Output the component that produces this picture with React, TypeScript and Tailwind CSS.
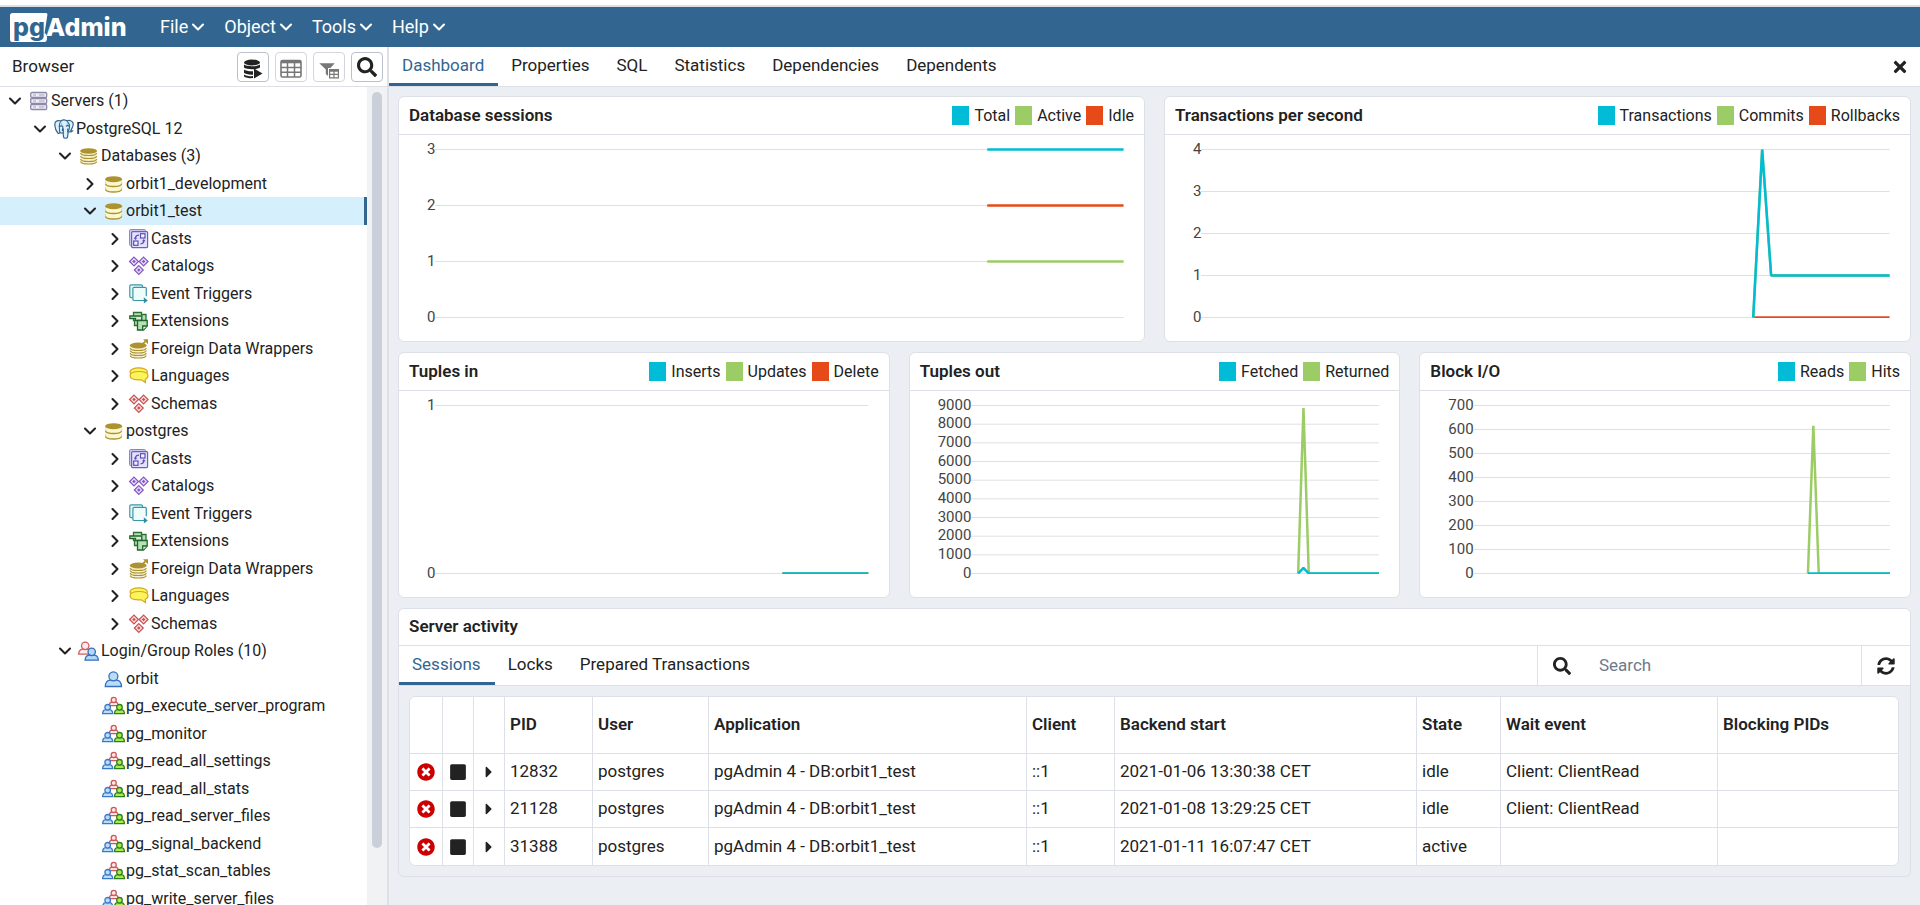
import { ReactNode } from 'react';
import clsx from 'clsx';
import { ChevronDown, ChevronRight } from 'lucide-react';
import { FaCaretRight, FaSearch, FaSquare, FaSyncAlt, FaTimes, FaTimesCircle } from 'react-icons/fa';

const CYAN = '#00bcd7';
const GREEN = '#9ccc65';
const RED = '#e64a19';

/* ---------- tree icons ---------- */

function Icon({ children }: { children: ReactNode }) {
  return (
    <svg width="20" height="20" viewBox="0 0 20 20" className="shrink-0 overflow-visible" fill="none" aria-hidden="true">
      {children}
    </svg>
  );
}

function ServersIcon() {
  return (
    <Icon>
      {[1.5, 7.5, 13.5].map((y) => (
        <g key={y}>
          <rect x="1.7" y={y} width="16" height="5" rx="1.2" fill="#efeef6" stroke="#8d89a8" strokeWidth="1.3" />
          <path d={`M4 ${y + 2.5}h3M10 ${y + 2.5}h5.5`} stroke="#a5a2bb" strokeWidth="1" />
        </g>
      ))}
    </Icon>
  );
}

function ElephantIcon() {
  return (
    <Icon>
      <path
        d="M5.5 1.6C2.6 1.2.6 3 .8 6c.2 3 1.5 6.3 3 8 .8.7 1.6.3 2.2-.5.8.6 2 .6 3.200.3l.3 4c.3 1.9 3.8 1.9 4.1 0l.6-5c1.6.3 3.6.1 4.4-.9-.7-.1-1.5-.1-1.8-.4C18.6 8.5 20 4.3 18.3 2.8 16.8 1.3 14.6 1 12.8 1.7 11.2.9 8.5.8 7 1.9c-.5-.1-1-.3-1.5-.3z"
        fill="#dcf1fb"
        stroke="#32668f"
        strokeWidth="1.2"
      />
      <path
        d="M7 2C5 4.500 5.200 8 5.500 10c.2 1.500-.3 2.500.5 3.500M5.400 7.500c1-.9 3-.8 3.400 0 .3 1.500-.3 3-.6 4.500M12.800 1.800c1.700 1.600 2.900 3.400 2.700 5.700-.2 1.500.1 2.500-1.300 4.500M11.800 7.200c1.200-.8 2.600-.6 3.700 0M9.400 9.500c.2 2-.3 3-.2 4.500M13.700 9.500v4"
        stroke="#32668f"
        strokeWidth="1.1"
      />
      <path d="M7.3 5h.8M12.8 5h.8" stroke="#32668f" strokeWidth="1.2" />
    </Icon>
  );
}

function DatabasesIcon() {
  return (
    <Icon>
      <path d="M1.6 5v10.500c0 1.5 3.5 2.5 8 2.5s8-1 8-2.5V5z" fill="#f5f1c8" />
      <path
        d="M1.6 7c0 1.5 3.5 2.5 8 2.5s8-1 8-2.500M1.6 10c0 1.5 3.5 2.5 8 2.5s8-1 8-2.500M1.6 13c0 1.5 3.5 2.5 8 2.5s8-1 8-2.500M1.6 15.500c0 1.5 3.5 2.5 8 2.5s8-1 8-2.500"
        stroke="#ad9330"
        strokeWidth="1.2"
      />
      <ellipse cx="9.6" cy="5" rx="8.5" ry="2.8" fill="#ad9330" />
    </Icon>
  );
}

function DatabaseIcon() {
  return (
    <Icon>
      <path d="M1.6 5v10.500c0 1.5 3.5 2.5 8 2.5s8-1 8-2.5V5z" fill="#fbf8cf" />
      <path
        d="M1.6 9.800c0 1.7 3.5 2.7 8 2.7s8-1 8-2.700M1.6 15.300c0 1.7 3.5 2.7 8 2.7s8-1 8-2.700"
        stroke="#ad9330"
        strokeWidth="1.4"
      />
      <path d="M1.5 13v2.300M17.7 13v2.300M1.5 7.500v2.300M17.7 7.500v2.300" stroke="#d8cd8a" strokeWidth=".8" />
      <ellipse cx="9.6" cy="5.2" rx="8.5" ry="3" fill="#ad9330" />
    </Icon>
  );
}

function CastsIcon() {
  return (
    <Icon>
      <rect x=".6" y=".6" width="16" height="16" rx="1" fill="#d3cff3" stroke="#8479cd" />
      <rect x="2.6" y="2.6" width="16" height="16" rx="1" fill="#e4e2fb" stroke="#6c5fc0" strokeWidth="1.2" />
      <rect x="11.5" y="4.7" width="4.5" height="4.3" fill="#f3f2ff" stroke="#5c4fb5" strokeWidth="1.2" />
      <rect x="4.7" y="12" width="4.3" height="4.3" fill="#f3f2ff" stroke="#5c4fb5" strokeWidth="1.2" />
      <path d="M10 6.200c-2.500 0-3.600 1-3.600 3.300M11.500 14.800c2.300 0 3.300-1 3.300-3.200" stroke="#5c4fb5" strokeWidth="1.3" />
      <path d="M4.700 8.700h3.600L6.400 11zM13 12.300h3.600l-1.800-2.300z" fill="#5c4fb5" />
    </Icon>
  );
}

function Diamonds({ stroke, fill }: { stroke: string; fill: string }) {
  const points = [
    [5, 5.5],
    [14.6, 5.5],
    [9.8, 14],
  ];
  return (
    <Icon>
      {points.map(([x, y]) => (
        <g key={x}>
          <path d={`M${x} ${y - 4.4}l4.4 4.4-4.4 4.4-4.4-4.4z`} fill={fill} stroke={stroke} strokeWidth="1.3" />
          <path d={`M${x} ${y - 1.8}l1.8 1.8-1.8 1.8-1.8-1.8z`} fill={stroke} />
        </g>
      ))}
    </Icon>
  );
}

function EventTriggersIcon() {
  return (
    <Icon>
      <path
        d="M3.500 13.600H2.200c-.9 0-1.400-.5-1.400-1.400V2.300C.8 1.400 1.300.9 2.200.9h9.900c.9 0 1.400.5 1.400 1.400v.6"
        fill="#e6f9fa"
        stroke="#3b97a8"
        strokeWidth="1.2"
      />
      <path d="M17.300 12.500V4.600c0-.8-.5-1.300-1.300-1.300H5.200c-.8 0-1.300.5-1.300 1.300v10.600c0 .8.5 1.300 1.300 1.300h9.600V12.500z" fill="#effcfc" />
      <path
        d="M17.300 12.200V4.600c0-.8-.5-1.300-1.300-1.300H5.200c-.8 0-1.300.5-1.300 1.300v10.600c0 .8.5 1.300 1.300 1.300h11"
        stroke="#3b97a8"
        strokeWidth="1.2"
      />
      <path d="M14.800 13.200l4 3.300-4 3z" fill="#2d8ea0" />
    </Icon>
  );
}

function ExtensionsIcon() {
  return (
    <Icon>
      <path d="M4.500 1.500h8v2h4.500v8H13v3H5.500V9.500H4.500z" fill="#b7e0b9" stroke="#2a7132" strokeWidth="1.3" />
      <path d="M.8 5h12v4.500H6.500V7.500H.8z" fill="#d4efd4" stroke="#1f6428" strokeWidth="1.3" />
      <path d="M8.500 9.500h9.700v5.500L14.500 19h-6z" fill="#b7e0b9" stroke="#1f6428" strokeWidth="1.3" />
      <path d="M13.700 19v-4h4.500" fill="#e6f7e6" stroke="#1f6428" strokeWidth="1.3" />
    </Icon>
  );
}

function ForeignDataIcon() {
  return (
    <Icon>
      <path d="M1.2 7v9c0 1.5 3.5 2.5 8 2.5s8-1 8-2.5V7z" fill="#f5f1d5" />
      <path
        d="M1.2 9c0 1.5 3.5 2.5 8 2.5s8-1 8-2.500M1.2 11.500c0 1.5 3.5 2.5 8 2.5s8-1 8-2.500M1.2 14c0 1.5 3.5 2.5 8 2.5s8-1 8-2.500M1.2 16.500c0 1.5 3.5 2.5 8 2.5s8-1 8-2.500"
        stroke="#ad9330"
        strokeWidth="1.2"
      />
      <ellipse cx="9.2" cy="6.5" rx="8.5" ry="2.9" fill="#ad9330" />
      <path d="M13 5.500l3.500-3.200" stroke="#ad9330" strokeWidth="1.8" />
      <path d="M14 .2h5v5z" fill="#ad9330" />
    </Icon>
  );
}

function LanguagesIcon() {
  return (
    <Icon>
      <ellipse cx="9.7" cy="6" rx="8.7" ry="4.2" fill="#fdf45c" stroke="#d3a91f" strokeWidth="1.2" />
      <path
        d="M10 5.500c5 0 9 1.5 9 4.300 0 1.7-1 2.8-2.700 3.400l.2 3.300-4.200-2.700c-.8.1-1.500.1-2.300.1-5 0-9-1.3-9-4.100s4-4.300 9-4.300z"
        fill="#fdf45c"
        stroke="#d3a91f"
        strokeWidth="1.2"
      />
    </Icon>
  );
}

interface PersonProps {
  x: number;
  y: number;
  scale: number;
  stroke: string;
  fill: string;
}

function Person({ x, y, scale, stroke, fill }: PersonProps) {
  return (
    <g transform={`translate(${x} ${y}) scale(${scale})`} stroke={stroke} strokeWidth={1.3 / scale} fill={fill}>
      <path d="M.7 15.500c.2-3.500 1.500-6 4.800-6.300h6.600c3.300.3 4.600 2.800 4.800 6.300z" />
      <circle cx="8.8" cy="5.3" r="4.5" />
    </g>
  );
}

function RolesIcon() {
  return (
    <Icon>
      <Person x={-1} y={0.5} scale={0.82} stroke="#cf5f5f" fill="#fdeaea" />
      <Person x={5.5} y={6.5} scale={0.82} stroke="#2f6fc4" fill="#b5d8f3" />
    </Icon>
  );
}

function UserIcon() {
  return (
    <Icon>
      <Person x={0.6} y={2} scale={1} stroke="#3570c4" fill="#bcdcf3" />
    </Icon>
  );
}

function GroupIcon() {
  return (
    <Icon>
      <Person x={4.8} y={1} scale={0.56} stroke="#cf5858" fill="#fdeaea" />
      <Person x={-1.8} y={8} scale={0.62} stroke="#3b78c9" fill="#bcdcf3" />
      <Person x={10} y={8} scale={0.62} stroke="#2e7d1f" fill="#a9ea4e" />
    </Icon>
  );
}

/* ---------- tree data ---------- */

interface TreeRow {
  level: number;
  label: string;
  icon: ReactNode;
  state?: 'open' | 'closed';
  selected?: boolean;
}

const DB_CHILDREN: TreeRow[] = [
  { level: 4, label: 'Casts', icon: <CastsIcon />, state: 'closed' },
  { level: 4, label: 'Catalogs', icon: <Diamonds stroke="#8658c6" fill="#ece2fa" />, state: 'closed' },
  { level: 4, label: 'Event Triggers', icon: <EventTriggersIcon />, state: 'closed' },
  { level: 4, label: 'Extensions', icon: <ExtensionsIcon />, state: 'closed' },
  { level: 4, label: 'Foreign Data Wrappers', icon: <ForeignDataIcon />, state: 'closed' },
  { level: 4, label: 'Languages', icon: <LanguagesIcon />, state: 'closed' },
  { level: 4, label: 'Schemas', icon: <Diamonds stroke="#c95353" fill="#fae4e4" />, state: 'closed' },
];

const GROUP_ROLES = [
  'pg_execute_server_program',
  'pg_monitor',
  'pg_read_all_settings',
  'pg_read_all_stats',
  'pg_read_server_files',
  'pg_signal_backend',
  'pg_stat_scan_tables',
  'pg_write_server_files',
];

const TREE: TreeRow[] = [
  { level: 0, label: 'Servers (1)', icon: <ServersIcon />, state: 'open' },
  { level: 1, label: 'PostgreSQL 12', icon: <ElephantIcon />, state: 'open' },
  { level: 2, label: 'Databases (3)', icon: <DatabasesIcon />, state: 'open' },
  { level: 3, label: 'orbit1_development', icon: <DatabaseIcon />, state: 'closed' },
  { level: 3, label: 'orbit1_test', icon: <DatabaseIcon />, state: 'open', selected: true },
  ...DB_CHILDREN,
  { level: 3, label: 'postgres', icon: <DatabaseIcon />, state: 'open' },
  ...DB_CHILDREN,
  { level: 2, label: 'Login/Group Roles (10)', icon: <RolesIcon />, state: 'open' },
  { level: 3, label: 'orbit', icon: <UserIcon /> },
  ...GROUP_ROLES.map((label) => ({ level: 3, label, icon: <GroupIcon /> })),
];

const INDENT = ['pl-[5px]', 'pl-[30px]', 'pl-[55px]', 'pl-[80px]', 'pl-[105px]'];

/* ---------- header ---------- */

function Header() {
  return (
    <header className="mt-[5px] flex h-[42px] shrink-0 items-center border-t-2 border-[#dcdfe3] bg-[#326690] pl-[10px] text-white">
      <a
        href="#"
        aria-label="pgAdmin"
        className="relative flex h-[29px] w-[150px] items-center font-[Inter,sans-serif] text-[25px] font-extrabold"
      >
        <svg width="38" height="29" viewBox="0 0 38 29" className="absolute top-0 left-0" aria-hidden="true">
          <path
            d="M2.500 0H36q1.800 0 1.400 1.800L34.600 20q3 1.500 2.300 6.500-.3 2.500-2.500 2.500H2.500Q0 29 0 26.500v-24Q0 0 2.500 0z"
            fill="#fff"
          />
        </svg>
        <span className="relative w-9 pl-[3px] leading-6 text-[#326690]">pg</span>
        <span className="relative leading-6">Admin</span>
      </a>
      <nav className="flex gap-4">
        {['File', 'Object', 'Tools', 'Help'].map((item) => (
          <button key={item} className="flex items-center text-lg leading-6">
            {item}
            <ChevronDown className="size-5" strokeWidth={2.5} />
          </button>
        ))}
      </nav>
    </header>
  );
}

/* ---------- sidebar ---------- */

function ToolButton({ label, disabled, children }: { label: string; disabled?: boolean; children: ReactNode }) {
  return (
    <button
      aria-label={label}
      disabled={disabled}
      className={clsx(
        'flex h-[30px] w-8 items-center justify-center rounded border bg-white',
        disabled ? 'border-[#d3d6de] text-[#777]' : 'border-[#bac1cd] text-[#222]',
      )}
    >
      {children}
    </button>
  );
}

function Sidebar() {
  return (
    <aside className="flex w-[389px] shrink-0 flex-col border-r-2 border-[#dde0e6]">
      <div className="flex h-10 shrink-0 items-center gap-[6px] border-b border-[#dde0e6] pr-1 pl-3">
        <h2 className="flex-1 pb-px text-[17px] leading-6">Browser</h2>
        <ToolButton label="Query Tool">
          <svg width="20" height="20" viewBox="0 0 20 20" className="mt-1" fill="currentColor" aria-hidden="true">
            <ellipse cx="9" cy="3.5" rx="8" ry="3" />
            <path d="M1 5.500c2 2.300 14 2.300 16 0v3c-2 2.300-14 2.300-16 0zM1 10.500c1.500 1.400 6 2 9 1.700v3.500C6 16 2 15 1 13.800zM1 15.400c1.500 1.400 6 2 9 1.700v2C6 19.500 1 18.600 1 17z" />
            <path d="M11 9.500l8.500 5-8.500 5z" />
          </svg>
        </ToolButton>
        <ToolButton label="View Data" disabled>
          <svg width="22" height="20" viewBox="0 0 22 20" className="mt-1" fill="none" stroke="currentColor" aria-hidden="true">
            <rect x="1" y="1.5" width="20" height="16.5" rx="1.5" strokeWidth="1.6" />
            <path d="M1 3h20" strokeWidth="2.6" />
            <path d="M1 8.500h20M1 13.200h20M7.500 3v15M14.500 3v15" strokeWidth="1.5" />
          </svg>
        </ToolButton>
        <ToolButton label="Filtered Rows" disabled>
          <svg width="20" height="18" viewBox="0 0 20 18" className="mt-2" fill="currentColor" aria-hidden="true">
            <path d="M.3 1.200h15.400L10 7.500v7.300L6.800 12V7.500z" />
            <rect x="9" y="6" width="11" height="11" fill="#fff" />
            <path
              d="M10 7h10v9.500H10zm1.200 2.800v2h3.200v-2zm4.400 0v2h3.200v-2zm-4.400 3.200v2.300h3.200V13zm4.400 0v2.300h3.200V13z"
              fillRule="evenodd"
            />
          </svg>
        </ToolButton>
        <ToolButton label="Search Objects">
          <FaSearch className="size-5" />
        </ToolButton>
      </div>
      <div className="flex min-h-0 flex-1">
        <ul role="tree" aria-label="Object browser" className="min-w-0 flex-1 overflow-hidden text-base">
          {TREE.map((row, i) => (
            <li
              key={i}
              role="treeitem"
              aria-selected={!!row.selected}
              className={clsx(
                'flex items-center odd:h-7 even:h-[27px]',
                INDENT[row.level],
                row.selected && 'border-r-[3px] border-[#326690] bg-[#d6effc]',
              )}
            >
              <span className="mr-1 flex w-5 shrink-0 justify-center">
                {row.state === 'open' && <ChevronDown className="size-5" strokeWidth={2.5} />}
                {row.state === 'closed' && <ChevronRight className="size-5" strokeWidth={2.5} />}
              </span>
              {row.icon}
              <span className="ml-[2px] leading-6 whitespace-nowrap">{row.label}</span>
            </li>
          ))}
        </ul>
        <div className="flex w-5 justify-center bg-[#f1f2f4] pt-[5px]">
          <div className="h-[93%] w-[10px] rounded-full bg-[#cacfd9]" />
        </div>
      </div>
    </aside>
  );
}

/* ---------- charts ---------- */

interface Series {
  name: string;
  color: string;
  // pairs of horizontal position (0 to 1) and value
  points: [number, number][];
}

interface ChartProps {
  title: string;
  max: number;
  step: number;
  series: Series[];
}

const PLOT_HEIGHT = 168;

const flat = (value: number): [number, number][] => [[0.802, value], [1, value]];
const spike = (peak: number, rest: number): [number, number][] => [
  [0.802, 0],
  [0.815, peak],
  [0.828, rest],
  [1, rest],
];

function Chart({ title, max, step, series }: ChartProps) {
  const ticks: number[] = [];
  for (let v = max; v >= 0; v -= step) ticks.push(v);
  const toY = (v: number) => PLOT_HEIGHT - (v / max) * PLOT_HEIGHT;

  return (
    <section className="min-w-0 flex-1 rounded-md border border-[#dde0e6] bg-white">
      <div className="flex h-[38px] items-center justify-between border-b border-[#dde0e6] px-[10px]">
        <h3 className="text-[17px] font-semibold">{title}</h3>
        <ul className="flex gap-[5px] text-base">
          {series.map((s) => (
            <li key={s.name} className="flex items-center gap-[5px]">
              <span className="h-[19px] w-[17px]" style={{ backgroundColor: s.color }} />
              {s.name}
            </li>
          ))}
        </ul>
      </div>
      <div className="flex items-start pt-3 pr-5 pb-[23px] pl-7">
        <div className="mt-[2px] flex h-[168px] flex-col justify-between text-right text-[15px] text-[#444]">
          {ticks.map((t) => (
            <span key={t} className="flex h-0 items-center justify-end">
              {t}
            </span>
          ))}
        </div>
        {/* two extra units on top keep the stroke of a series that runs at max; the zero line is cut at the axis */}
        <svg
          viewBox={`0 -2 1000 ${PLOT_HEIGHT + 3}`}
          preserveAspectRatio="none"
          className="h-[171px] min-w-0 flex-1"
          fill="none"
          role="img"
          aria-label={title}
        >
          {ticks.map((t) => (
            <path key={t} d={`M0 ${toY(t) + 0.5}H1000`} stroke="#dde0e6" vectorEffect="non-scaling-stroke" />
          ))}
          {[...series].reverse().map((s) => (
            <polyline
              key={s.name}
              points={s.points.map(([x, v]) => `${x * 1000},${toY(v) + 0.5}`).join(' ')}
              stroke={s.color}
              strokeWidth="2.5"
              strokeLinejoin="bevel"
              vectorEffect="non-scaling-stroke"
            />
          ))}
        </svg>
      </div>
    </section>
  );
}

const SESSIONS_CHART: ChartProps = {
  title: 'Database sessions',
  max: 3,
  step: 1,
  series: [
    { name: 'Total', color: CYAN, points: flat(3) },
    { name: 'Active', color: GREEN, points: flat(1) },
    { name: 'Idle', color: RED, points: flat(2) },
  ],
};

const TRANSACTIONS_CHART: ChartProps = {
  title: 'Transactions per second',
  max: 4,
  step: 1,
  series: [
    { name: 'Transactions', color: CYAN, points: spike(4, 1) },
    { name: 'Commits', color: GREEN, points: spike(4, 1) },
    { name: 'Rollbacks', color: RED, points: flat(0) },
  ],
};

const TUPLES_IN_CHART: ChartProps = {
  title: 'Tuples in',
  max: 1,
  step: 1,
  series: [
    { name: 'Inserts', color: CYAN, points: flat(0) },
    { name: 'Updates', color: GREEN, points: flat(0) },
    { name: 'Delete', color: RED, points: flat(0) },
  ],
};

const TUPLES_OUT_CHART: ChartProps = {
  title: 'Tuples out',
  max: 9000,
  step: 1000,
  series: [
    { name: 'Fetched', color: CYAN, points: spike(300, 0) },
    { name: 'Returned', color: GREEN, points: spike(8870, 0) },
  ],
};

const BLOCK_IO_CHART: ChartProps = {
  title: 'Block I/O',
  max: 700,
  step: 100,
  series: [
    { name: 'Reads', color: CYAN, points: flat(0) },
    { name: 'Hits', color: GREEN, points: spike(615, 0) },
  ],
};

/* ---------- tabs ---------- */

function Tabs({ items, label }: { items: string[]; label: string }) {
  return (
    <div role="tablist" aria-label={label} className="flex">
      {items.map((item, i) => (
        <button
          key={item}
          role="tab"
          aria-selected={i === 0}
          className={clsx(
            'border-b-[3px] pt-[2px] pr-[14px] pl-[13px] text-[17px]',
            i === 0 ? 'border-[#326690] text-[#326690]' : 'border-transparent',
          )}
        >
          {item}
        </button>
      ))}
    </div>
  );
}

/* ---------- server activity ---------- */

const COLUMNS = [
  { name: 'PID', width: 'w-[88px]' },
  { name: 'User', width: 'w-[116px]' },
  { name: 'Application', width: 'w-[318px]' },
  { name: 'Client', width: 'w-[88px]' },
  { name: 'Backend start', width: 'w-[302px]' },
  { name: 'State', width: 'w-[84px]' },
  { name: 'Wait event', width: 'w-[217px]' },
  { name: 'Blocking PIDs', width: '' },
];

const ROWS = [
  ['12832', 'postgres', 'pgAdmin 4 - DB:orbit1_test', '::1', '2021-01-06 13:30:38 CET', 'idle', 'Client: ClientRead', ''],
  ['21128', 'postgres', 'pgAdmin 4 - DB:orbit1_test', '::1', '2021-01-08 13:29:25 CET', 'idle', 'Client: ClientRead', ''],
  ['31388', 'postgres', 'pgAdmin 4 - DB:orbit1_test', '::1', '2021-01-11 16:07:47 CET', 'active', '', ''],
];

const CELL = 'border-r border-b border-[#dde0e6] px-[5px] last:border-r-0';

function ServerActivity() {
  return (
    <section className="overflow-hidden rounded-md border border-[#dde0e6]">
      <h3 className="flex h-[37px] items-center border-b border-[#dde0e6] bg-white px-[10px] text-[17px] font-semibold">
        Server activity
      </h3>
      <div className="flex h-10 justify-between border-b border-[#dde0e6] bg-white">
        <Tabs label="Server activity" items={['Sessions', 'Locks', 'Prepared Transactions']} />
        <div className="flex">
          <label className="flex w-[324px] items-center border-l border-[#dde0e6] pl-[15px]">
            <FaSearch className="size-[18px] shrink-0" />
            <input
              type="text"
              aria-label="Search"
              placeholder="Search"
              className="ml-7 min-w-0 flex-1 text-[17px] outline-none placeholder:text-[#6c7b8b]"
            />
          </label>
          <button aria-label="Refresh" className="flex w-[49px] items-center justify-center border-l border-[#dde0e6]">
            <FaSyncAlt className="size-[18px]" />
          </button>
        </div>
      </div>
      <div className="py-[10px] pr-[11px] pl-[10px]">
        <div className="overflow-hidden rounded-md border border-[#dde0e6] bg-white">
          <table className="w-full table-fixed border-separate border-spacing-0 text-left text-[17px]">
            <thead>
              <tr className="h-[57px]">
                <th className={clsx(CELL, 'w-[33px]')} aria-label="Terminate" />
                <th className={clsx(CELL, 'w-[31px]')} aria-label="Cancel" />
                <th className={clsx(CELL, 'w-[31px]')} aria-label="Details" />
                {COLUMNS.map((c) => (
                  <th key={c.name} className={clsx(CELL, c.width, 'font-semibold')}>
                    {c.name}
                  </th>
                ))}
              </tr>
            </thead>
            <tbody>
              {ROWS.map((row) => (
                <tr key={row[0]} className="h-[37px] last:*:border-b-0">
                  <td className={CELL}>
                    <button aria-label="Terminate session" className="flex w-full justify-center text-[#cc0000]">
                      <FaTimesCircle className="size-[18px] shrink-0" />
                    </button>
                  </td>
                  <td className={CELL}>
                    <button aria-label="Cancel query" className="flex w-full justify-center">
                      <FaSquare className="size-[18px] shrink-0" />
                    </button>
                  </td>
                  <td className={CELL}>
                    <button aria-label="Show details" className="flex w-full justify-center">
                      <FaCaretRight className="size-[18px] shrink-0" />
                    </button>
                  </td>
                  {row.map((value, i) => (
                    <td key={i} className={CELL}>
                      {value}
                    </td>
                  ))}
                </tr>
              ))}
            </tbody>
          </table>
        </div>
      </div>
    </section>
  );
}

/* ---------- page ---------- */

export default function App() {
  return (
    <div className="flex h-screen flex-col overflow-hidden bg-white font-[Roboto,sans-serif] text-[#222]">
      <Header />
      <div className="flex min-h-0 flex-1">
        <Sidebar />
        <main className="flex min-w-0 flex-1 flex-col bg-[#ebeef3]">
          <div className="flex h-10 shrink-0 justify-between border-b border-[#dde0e6] bg-white pr-[10px]">
            <Tabs
              label="Object details"
              items={['Dashboard', 'Properties', 'SQL', 'Statistics', 'Dependencies', 'Dependents']}
            />
            <button aria-label="Close panel" className="px-px">
              <FaTimes className="size-[18px]" />
            </button>
          </div>
          <div className="flex flex-col gap-[10px] px-[9px] pt-[9px]">
            <div className="flex gap-[19px]">
              <Chart {...SESSIONS_CHART} />
              <Chart {...TRANSACTIONS_CHART} />
            </div>
            <div className="flex gap-[19px]">
              <Chart {...TUPLES_IN_CHART} />
              <Chart {...TUPLES_OUT_CHART} />
              <Chart {...BLOCK_IO_CHART} />
            </div>
            <ServerActivity />
          </div>
        </main>
      </div>
    </div>
  );
}
